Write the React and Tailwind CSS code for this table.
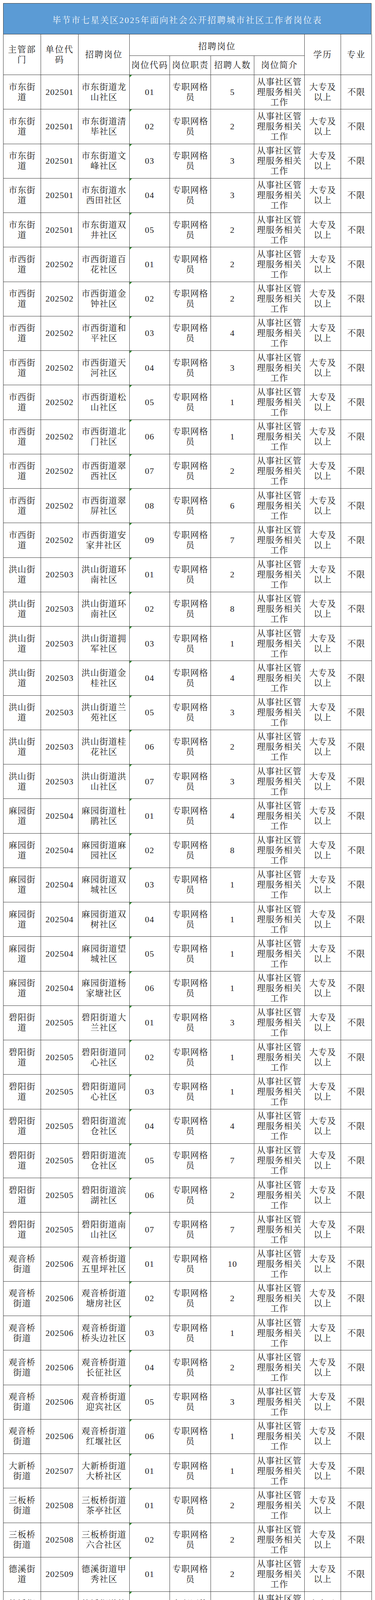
import React from "react";

// 主管部门 / 单位代码 / 招聘岗位 / 岗位代码 / 招聘人数
const rows = [
  ["市东街道", "202501", "市东街道龙山社区", "01", 5],
  ["市东街道", "202501", "市东街道清毕社区", "02", 2],
  ["市东街道", "202501", "市东街道文峰社区", "03", 3],
  ["市东街道", "202501", "市东街道水西田社区", "04", 3],
  ["市东街道", "202501", "市东街道双井社区", "05", 2],
  ["市西街道", "202502", "市西街道百花社区", "01", 2],
  ["市西街道", "202502", "市西街道金钟社区", "02", 2],
  ["市西街道", "202502", "市西街道和平社区", "03", 4],
  ["市西街道", "202502", "市西街道天河社区", "04", 3],
  ["市西街道", "202502", "市西街道松山社区", "05", 1],
  ["市西街道", "202502", "市西街道北门社区", "06", 1],
  ["市西街道", "202502", "市西街道翠西社区", "07", 2],
  ["市西街道", "202502", "市西街道翠屏社区", "08", 6],
  ["市西街道", "202502", "市西街道安家井社区", "09", 7],
  ["洪山街道", "202503", "洪山街道环南社区", "01", 2],
  ["洪山街道", "202503", "洪山街道环南社区", "02", 8],
  ["洪山街道", "202503", "洪山街道拥军社区", "03", 1],
  ["洪山街道", "202503", "洪山街道金桂社区", "04", 4],
  ["洪山街道", "202503", "洪山街道兰苑社区", "05", 3],
  ["洪山街道", "202503", "洪山街道桂花社区", "06", 2],
  ["洪山街道", "202503", "洪山街道洪山社区", "07", 3],
  ["麻园街道", "202504", "麻园街道杜鹃社区", "01", 4],
  ["麻园街道", "202504", "麻园街道麻园社区", "02", 8],
  ["麻园街道", "202504", "麻园街道双城社区", "03", 1],
  ["麻园街道", "202504", "麻园街道双树社区", "04", 1],
  ["麻园街道", "202504", "麻园街道望城社区", "05", 1],
  ["麻园街道", "202504", "麻园街道杨家塘社区", "06", 1],
  ["碧阳街道", "202505", "碧阳街道大兰社区", "01", 3],
  ["碧阳街道", "202505", "碧阳街道同心社区", "02", 1],
  ["碧阳街道", "202505", "碧阳街道同心社区", "03", 1],
  ["碧阳街道", "202505", "碧阳街道流仓社区", "04", 4],
  ["碧阳街道", "202505", "碧阳街道流仓社区", "05", 7],
  ["碧阳街道", "202505", "碧阳街道滨湖社区", "06", 2],
  ["碧阳街道", "202505", "碧阳街道南山社区", "07", 7],
  ["观音桥街道", "202506", "观音桥街道五里坪社区", "01", 10],
  ["观音桥街道", "202506", "观音桥街道塘房社区", "02", 2],
  ["观音桥街道", "202506", "观音桥街道桥头边社区", "03", 1],
  ["观音桥街道", "202506", "观音桥街道长征社区", "04", 2],
  ["观音桥街道", "202506", "观音桥街道迎宾社区", "05", 3],
  ["观音桥街道", "202506", "观音桥街道红堰社区", "06", 1],
  ["大新桥街道", "202507", "大新桥街道大桥社区", "01", 1],
  ["三板桥街道", "202508", "三板桥街道茶亭社区", "01", 2],
  ["三板桥街道", "202508", "三板桥街道六合社区", "02", 2],
  ["德溪街道", "202509", "德溪街道甲秀社区", "01", 2],
  ["德溪街道", "202509", "德溪街道德沟社区", "02", 2],
  ["青龙街道", "202510", "青龙街道中屯社区", "01", 3],
  ["青龙街道", "202510", "青龙街道豪沟社区", "02", 2],
  ["甘河街道", "202511", "甘河街道百龙社区", "01", 3],
  ["甘河街道", "202511", "甘河街道坪子社区", "02", 1],
  ["甘河街道", "202511", "甘河街道滨河社区", "03", 2],
  ["甘河街道", "202511", "甘河街道箐口社区", "04", 2],
  ["归化街道", "202512", "归化街道同心社区", "01", 9],
  ["归化街道", "202512", "归化街道同德社区", "02", 4],
];

// 按固定字数折行，跟原表的换行一致
const chunk = (s, n) => {
  const out = [];
  for (let i = 0; i < s.length; i += n) out.push(s.slice(i, i + n));
  return out;
};

const cols =
  "grid grid-cols-[96px_96px_131px_103px_105px_111px_129px_93px_79px]";

function Cell({ text, per, className = "" }) {
  const lines = per ? chunk(text, per) : [text];
  return (
    <div
      className={
        "relative flex flex-col items-center justify-center text-center border-r border-b border-[#3a3a3a] " +
        className
      }
    >
      {lines.map((l, i) => (
        <span key={i} className="block whitespace-nowrap leading-[26px]">
          {l}
        </span>
      ))}
    </div>
  );
}

export default function App() {
  return (
    <div className="bg-white pt-[8px] pl-[8px] pb-[2px] font-[family-name:Liberation_Serif,Noto_Serif_CJK_SC,Noto_Sans_CJK_SC,serif] text-[22px]/[26px] tracking-[1px] text-[#222]">
      <div className="w-[943px]">
        {/* 标题 */}
        <div className="h-[80px] border border-[#3a3a3a] bg-[#5b9bd5] flex items-center justify-center pt-[8px]">
          <span className="text-[#f3f6fa] tracking-[2.5px] leading-[26px]">
            毕节市七星关区2025年面向社会公开招聘城市社区工作者岗位表
          </span>
        </div>

        {/* 表头 */}
        <div className={cols + " h-[104px] grid-rows-[55px_49px] border-l border-[#3a3a3a]"}>
          <Cell text="主管部门" per={3} className="row-span-2 tracking-[2px]" />
          <Cell text="单位代码" per={3} className="row-span-2 tracking-[2px]" />
          <Cell text="招聘岗位" className="row-span-2 tracking-[2px]" />
          <Cell text="招聘岗位" className="col-span-4 pt-[8px] tracking-[2px]" />
          <Cell text="学历" className="row-span-2 tracking-[2px]" />
          <Cell text="专业" className="row-span-2 tracking-[2px]" />
          <Cell text="岗位代码" className="tracking-[1.5px]" />
          <Cell text="岗位职责" className="tracking-[1.5px]" />
          <Cell text="招聘人数" className="tracking-[1.5px]" />
          <Cell text="岗位简介" className="tracking-[1.5px]" />
        </div>

        {/* 数据 */}
        <div className="border-l border-[#3a3a3a]">
          {rows.map(([dept, unit, post, code, num], i) => (
            <div key={i} className={cols + " h-[88.25px]"}>
              <Cell text={dept} per={3} />
              <Cell text={unit} />
              <Cell text={post} per={5} />
              <div className="relative flex items-center justify-center border-r border-b border-[#3a3a3a] leading-[26px]">
                <span className="absolute left-0 top-0 w-0 h-0 border-t-[6px] border-r-[6px] border-t-[#2e8b2e] border-r-transparent" />
                {code}
              </div>
              <Cell text="专职网格员" per={4} />
              <Cell text={String(num)} />
              <Cell text="从事社区管理服务相关工作" per={5} />
              <Cell text="大专及以上" per={3} />
              <Cell text="不限" />
            </div>
          ))}
        </div>
      </div>
    </div>
  );
}
